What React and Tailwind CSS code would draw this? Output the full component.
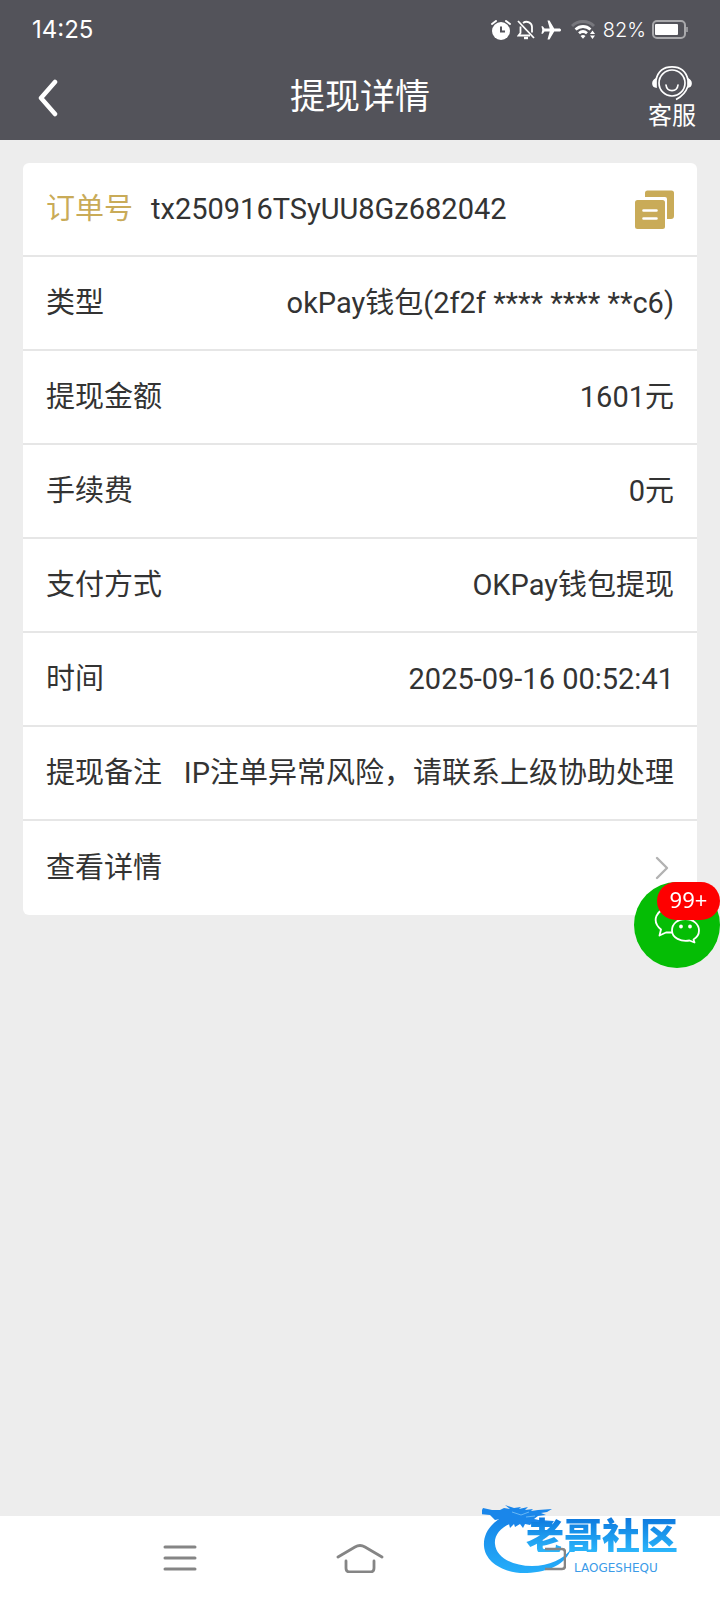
import React from 'react';

const rows = [
  { label: '类型', value: 'okPay钱包(2f2f **** **** **c6)' },
  { label: '提现金额', value: '1601元' },
  { label: '手续费', value: '0元' },
  { label: '支付方式', value: 'OKPay钱包提现' },
  { label: '时间', value: '2025-09-16 00:52:41' },
  { label: '提现备注', value: 'IP注单异常风险，请联系上级协助处理' },
];

const StatusBar = () => (
  <div className="flex h-14 items-center justify-between px-8 pt-1 text-white">
    <span className="font-['Inter','Noto_Sans_CJK_SC',sans-serif] text-2xl">14:25</span>
    <div className="flex items-center gap-1.5">
      <svg width="20" height="20" viewBox="0 0 20 20" fill="none">
        <circle cx="10" cy="11" r="9" fill="white" />
        <path d="M1 4l4-3M19 4l-4-3" stroke="white" strokeWidth="2" strokeLinecap="round" />
        <path d="M10 6.500v5h4" stroke="#53535a" strokeWidth="2" />
      </svg>
      <svg width="18" height="20" viewBox="0 0 18 20" fill="none" stroke="white" strokeWidth="1.800">
        <path d="M1 1l16 17" />
        <path d="M3.500 6.500V13l-2 2.500H13M6 3c4-3 9 0 9 4v5.500" />
        <path d="M7 18h4" strokeWidth="2.400" />
      </svg>
      <svg width="20" height="20" viewBox="0 0 20 20" fill="white">
        <path d="M20 10c0-1-.8-1.500-1.800-1.500h-5L8.500.5H6.500l2.200 8H3.500L1.800 6.200H.4L1.300 10 .4 13.800h1.400l1.700-2.300h5.200l-2.200 8h2l4.700-8h5c1 0 1.800-.5 1.800-1.500z" />
      </svg>
      <svg className="ml-1" width="26" height="20" viewBox="0 0 26 20" fill="none">
        <path d="M1 6c6-6 16-6 22 0" stroke="#77777d" strokeWidth="3" />
        <path d="M4.500 9.500c4.500-4 10.500-4 15 0M8 13.200c2.500-2.200 5.500-2.200 8 0" stroke="white" strokeWidth="2.800" />
        <path d="M9.500 16c1.500-1.500 3.500-1.500 5 0L12 18.800zM19 14l2.500-3.500L24 14zM19 15.500L21.500 19l2.500-3.500z" fill="white" />
      </svg>
      <span className="font-['Inter',sans-serif] text-xl font-light">82%</span>
      <svg width="36" height="20" viewBox="0 0 36 20" fill="none">
        <rect x="1" y="1" width="32" height="17" rx="4" stroke="#a9a9ac" strokeWidth="2" />
        <rect x="3" y="4" width="23" height="11" rx="1" fill="white" />
        <path d="M35 7v5" stroke="#a9a9ac" strokeWidth="1.500" />
      </svg>
    </div>
  </div>
);

const TitleBar = () => (
  <div className="grid h-[84px] grid-cols-[1fr_auto_1fr] items-center px-6 text-white">
    <button type="button" aria-label="返回" className="justify-self-start px-3">
      <svg width="24" height="38" viewBox="0 0 24 38" fill="none" stroke="white" strokeWidth="4.500" strokeLinecap="round" strokeLinejoin="round">
        <path d="M19 3L5 19l14 16" />
      </svg>
    </button>
    <h1 className="text-[35px] leading-10">提现详情</h1>
    <button type="button" className="flex flex-col items-center justify-self-end">
      <svg width="40" height="36" viewBox="0 0 40 36" fill="none" stroke="white" strokeWidth="1.700">
        <circle cx="20" cy="17" r="13" />
        <path d="M4 14C6 5 12 .9 20 .9s14 4.100 16 13.100M36 20c-2 6-5 10-12 13.500" />
        <path d="M14 19c1 7.500 11 7.500 12 0" strokeLinecap="round" />
        <path d="M4 13v8c-4-1-4-6 0-8zM36 13v8c4-1 4-6 0-8z" fill="white" />
      </svg>
      <span className="text-2xl leading-7">客服</span>
    </button>
  </div>
);

const OrderRow = () => (
  <div className="flex h-[94px] items-center border-b-2 border-[#e6e6e6] px-[23px]">
    <dt className="text-[#c9ab58]">订单号</dt>
    <dd className="flex flex-1 items-center justify-between pl-[18px]">
      <span>tx250916TSyUU8Gz682042</span>
      <button type="button" aria-label="复制">
        <svg width="40" height="40" viewBox="0 0 40 40" fill="#c9ab58">
          <path d="M11 8V4a2.500 2.500 0 0 1 2.500-2.500h24A2.500 2.500 0 0 1 40 4v23a3 3 0 0 1-3 3h-4V10a2 2 0 0 0-2-2z" />
          <rect x="1" y="11" width="30" height="29" rx="2.500" />
          <path d="M9.500 21.500h13M9.500 29.500h13" stroke="white" strokeWidth="2.600" strokeLinecap="round" />
        </svg>
      </button>
    </dd>
  </div>
);

const ChatButton = () => (
  <button type="button" aria-label="在线客服" className="fixed right-0 top-[882px] h-[86px] w-[86px] rounded-full bg-[#05bd05]">
    <svg className="absolute left-5 top-6" width="48" height="40" viewBox="0 0 48 40" fill="none" stroke="white" strokeWidth="1.800" strokeLinejoin="round">
      <path d="M18 26.500h-6l-6.500 3 1.500-6C-3 15 2 3 16 2c9 0 15 5 16 11" />
      <path d="M39.500 33.500l1 3-5-2C27 36 18 32 18 24.500c0-7 6-11.500 13.500-11.500S45 18 45 24.500c0 4-2 7-5.500 9z" />
      <circle cx="27" cy="20.500" r="1" fill="white" />
      <circle cx="36" cy="20.500" r="1" fill="white" />
    </svg>
    <span className="absolute right-0 top-0 flex h-[38px] w-[63px] items-center justify-center rounded-full bg-[#fe0000] pb-1 font-['Noto_Sans',sans-serif] text-[22px] text-white">
      99+
    </span>
  </button>
);

const Watermark = () => (
  <div className="pointer-events-none absolute bottom-6 right-4 h-[72px] w-[222px]">
    <svg className="absolute left-0 top-0" width="92" height="72" viewBox="0 0 92 72">
      <defs>
        <linearGradient id="dragon" x1="0" y1="0" x2="0" y2="1">
          <stop offset="0" stopColor="#1682e6" />
          <stop offset="1" stopColor="#25aefa" />
        </linearGradient>
      </defs>
      {/* body curling round to the tail */}
      <path
        fill="url(#dragon)"
        d="M25 11C10 17 1 29 2 42c1 16 20 28 43 27 22-1 39-9 44-24-7 10-22 17-39 17-20 0-36-9-37-22-1-9 6-17 17-21z"
      />
      {/* head, horns and whiskers */}
      <path
        fill="#1a86ea"
        d="M1 4l9 2 8 0 4-2 6 1-5-4 9 3 7-1-2 2 9-2-3 3 8-1-2 2 7-1 14-1-5 3-6 1 5 2-8 1-4 3 5 1 15 1-3 4-8 1-6-1-4-3-3 3-5-1-2 4-3-4-5 3-1-3-4 4-1-4-5 2 2-5-8 4 2-6-5 1-5-5-10-1z"
      />
      <path fill="none" stroke="#67b7f5" d="M30 8l9 3 8-3M44 13l9-1" />
    </svg>
    <span className="absolute left-[44px] top-3 bg-linear-to-b from-[#0e75dc] to-[#2cb6fb] bg-clip-text font-['Noto_Sans_CJK_SC',sans-serif] text-[38px] font-black leading-9 text-transparent">
      老哥社区
    </span>
    <span className="absolute left-[92px] top-[58px] font-['DejaVu_Sans',sans-serif] text-xs leading-3 text-[#3b9be8]">LAOGESHEQU</span>
  </div>
);

const BottomNav = () => (
  <nav className="relative h-[84px] bg-white">
    <Watermark />
    <div className="relative grid h-full grid-cols-3 items-center px-[90px]">
      <button type="button" aria-label="最近任务" className="justify-self-center">
        <svg width="34" height="28" viewBox="0 0 34 28" stroke="#858585" strokeWidth="3" strokeLinecap="round">
          <path d="M2 3h30M2 14h30M2 25h30" />
        </svg>
      </button>
      <button type="button" aria-label="主页" className="justify-self-center">
        <svg width="48" height="30" viewBox="0 0 48 30" fill="none" stroke="#858585" strokeWidth="2.800" strokeLinecap="round">
          <path d="M2 14L19 4q5-3 10 0l17 10" />
          <path d="M10 18v7q0 4 4 4h20q4 0 4-4v-7" />
        </svg>
      </button>
      <button type="button" aria-label="后退" className="justify-self-center">
        <svg width="52" height="28" viewBox="0 0 52 28" fill="none" stroke="#858585" strokeWidth="2.600">
          <path d="M31 5h17q3 0 3 3v14q0 3-3 3H31" />
        </svg>
      </button>
    </div>
  </nav>
);

const App = () => {
  return (
    <div className="flex min-h-screen flex-col bg-[#ededed] font-['Roboto','Noto_Sans_CJK_SC',sans-serif] text-[#333333]">
      <header className="bg-[#53535a]">
        <StatusBar />
        <TitleBar />
      </header>

      <main className="flex-1 px-[23px] pt-[23px]">
        <div className="rounded-md bg-white text-[29px] leading-10">
          <dl>
            <OrderRow />
            {rows.map((row) => (
              <div key={row.label} className="flex h-[94px] items-center justify-between border-b-2 border-[#e6e6e6] px-[23px]">
                <dt>{row.label}</dt>
                <dd>{row.value}</dd>
              </div>
            ))}
          </dl>
          <a href="#detail" className="flex h-[94px] items-center justify-between px-[23px]">
            查看详情
            <svg width="24" height="24" viewBox="0 0 24 24" fill="none" stroke="#b2b2b2" strokeWidth="2.400" strokeLinecap="round" strokeLinejoin="round">
              <path d="M7 2l10 10L7 22" />
            </svg>
          </a>
        </div>
      </main>

      <BottomNav />
      <ChatButton />
    </div>
  );
};

export default App;
